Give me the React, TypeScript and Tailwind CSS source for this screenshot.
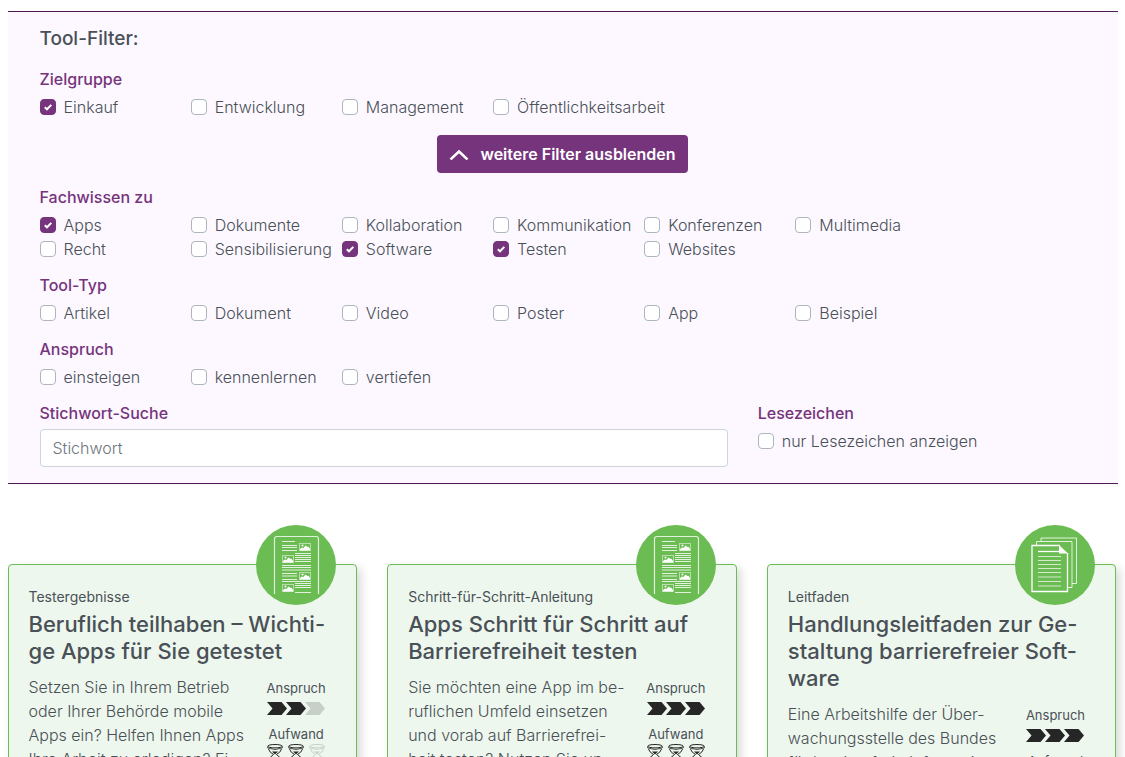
import type { ReactNode } from "react";

type Option = { label: string; checked?: boolean };

const zielgruppe: Option[] = [
  { label: "Einkauf", checked: true },
  { label: "Entwicklung" },
  { label: "Management" },
  { label: "Öffentlichkeitsarbeit" },
];

const fachwissen: Option[] = [
  { label: "Apps", checked: true },
  { label: "Dokumente" },
  { label: "Kollaboration" },
  { label: "Kommunikation" },
  { label: "Konferenzen" },
  { label: "Multimedia" },
  { label: "Recht" },
  { label: "Sensibilisierung" },
  { label: "Software", checked: true },
  { label: "Testen", checked: true },
  { label: "Websites" },
];

const toolTyp: Option[] = [
  { label: "Artikel" },
  { label: "Dokument" },
  { label: "Video" },
  { label: "Poster" },
  { label: "App" },
  { label: "Beispiel" },
];

const anspruch: Option[] = [
  { label: "einsteigen" },
  { label: "kennenlernen" },
  { label: "vertiefen" },
];

type Tool = {
  kind: string;
  title: string[];
  text: string[];
  level: number;
  effort: number;
  icon: "poster" | "pages";
};

const tools: Tool[] = [
  {
    kind: "Testergebnisse",
    title: ["Beruflich teilhaben – Wichti-", "ge Apps für Sie getestet"],
    text: [
      "Setzen Sie in Ihrem Betrieb",
      "oder Ihrer Behörde mobile",
      "Apps ein? Helfen Ihnen Apps",
      "Ihre Arbeit zu erledigen? Ei-",
    ],
    level: 2,
    effort: 2,
    icon: "poster",
  },
  {
    kind: "Schritt-für-Schritt-Anleitung",
    title: ["Apps Schritt für Schritt auf", "Barrierefreiheit testen"],
    text: [
      "Sie möchten eine App im be-",
      "ruflichen Umfeld einsetzen",
      "und vorab auf Barrierefrei-",
      "heit testen? Nutzen Sie un-",
    ],
    level: 3,
    effort: 3,
    icon: "poster",
  },
  {
    kind: "Leitfaden",
    title: ["Handlungsleitfaden zur Ge-", "staltung barrierefreier Soft-", "ware"],
    text: [
      "Eine Arbeitshilfe der Über-",
      "wachungsstelle des Bundes",
      "für barrierefreie Informati-",
    ],
    level: 3,
    effort: 3,
    icon: "pages",
  },
];

function Lines({ lines }: { lines: string[] }) {
  return (
    <>
      {lines.map((line) => (
        <span key={line} className="block whitespace-nowrap">
          {line}
        </span>
      ))}
    </>
  );
}

function Checkbox({ label, checked }: Option) {
  return (
    <label className="flex h-6 items-center gap-2 font-light whitespace-nowrap">
      <span className="grid size-4 shrink-0">
        <input
          type="checkbox"
          defaultChecked={checked}
          className="peer col-start-1 row-start-1 size-4 appearance-none rounded-sm border border-[#adb5bd] bg-white checked:border-[#75347c] checked:bg-[#75347c]"
        />
        <svg
          viewBox="0 0 16 16"
          className="pointer-events-none invisible col-start-1 row-start-1 size-4 peer-checked:visible"
          fill="none"
          stroke="#fff"
          strokeWidth="2"
        >
          <path d="M4.8 8.2 L7 10.3 L11.3 5.9" />
        </svg>
      </span>
      {label}
    </label>
  );
}

function Heading({ children }: { children: ReactNode }) {
  return <span className="block h-6 font-medium text-[#75347c]">{children}</span>;
}

function FilterGroup({ title, options }: { title: string; options: Option[] }) {
  return (
    <fieldset>
      <legend className="mb-1">
        <Heading>{title}</Heading>
      </legend>
      <div className="grid max-w-[907px] grid-cols-6">
        {options.map((option) => (
          <Checkbox key={option.label} {...option} />
        ))}
      </div>
    </fieldset>
  );
}

function Thumb({ x, y }: { x: number; y: number }) {
  return (
    <g transform={`translate(${x} ${y})`}>
      <rect x="0.5" y="0.5" width="11" height="7" fill="none" stroke="#fff" strokeOpacity="0.5" />
      <path d="M1 7.5 V6 L3 4.5 L4.5 5 L6.5 2.5 L8.5 4 L9.5 3.8 L11 6 V7.5 Z" fill="#fff" />
      <circle cx="3.5" cy="2.5" r="1" fill="#fff" />
    </g>
  );
}

function PosterIcon() {
  return (
    <svg viewBox="0 0 80 80" className="size-20" aria-hidden="true">
      <circle cx="40" cy="40" r="40" fill="#6bbc52" />
      <path
        d="M18.5 69 V14 Q18.5 11.5 21 11.5 H60 Q62.5 11.5 62.5 14 V69"
        fill="none"
        stroke="#fff"
        strokeOpacity="0.8"
        strokeWidth="1.2"
      />
      <g stroke="#fff" strokeOpacity="0.8">
        <path d="M26 16.5 H39 M26 20.5 H41 M26 22.5 H41 M26 25.5 H41" />
        <path d="M39 28.5 H55 M39 30.5 H55 M39 32.5 H55 M39 34.5 H55 M39 36.5 H55" />
        <path d="M26 40.5 H55 M26 42.5 H55 M26 45 H55" />
        <path d="M26 48.5 H41 M26 51 H41 M26 54.5 H41 M26 56.5 H55" />
        <path d="M39 58.5 H55 M39 60.5 H55 M39 62.5 H55 M39 67.5 H55" />
      </g>
      <Thumb x={43} y={18} />
      <Thumb x={26} y={30} />
      <Thumb x={43} y={47} />
      <Thumb x={26} y={59} />
    </svg>
  );
}

function PagesIcon() {
  return (
    <svg viewBox="0 0 80 80" className="size-20" aria-hidden="true">
      <circle cx="40" cy="40" r="40" fill="#6bbc52" />
      <g fill="none" stroke="#fff" strokeOpacity="0.8">
        <path d="M26 16 V13 H61.5 V58.5 H57" />
        <path d="M21.5 20 V16.5 H57 V62.5 H53" />
      </g>
      <path d="M45 20.5 H17 V66.5 H52.5 V28" fill="none" stroke="#fff" strokeWidth="1.3" />
      <path d="M44 20 L53 28.5 H44 Z" fill="#fff" />
      <path d="M23 26.5 H44" stroke="#fff" strokeWidth="1.3" />
      <path
        d="M23 31.5 H46 M23 35.5 H46 M23 39.5 H46 M23 43.5 H46 M23 47.5 H46 M23 52 H46 M23 56.5 H46 M23 61 H46"
        stroke="#fff"
        strokeOpacity="0.7"
      />
    </svg>
  );
}

function Arrows({ level }: { level: number }) {
  return (
    <svg viewBox="0 0 58 13" className="h-[13px] w-[58px]" aria-hidden="true">
      {[0, 1, 2].map((i) => (
        <path
          key={i}
          transform={`translate(${i * 19} 0)`}
          d="M0 0 H14.5 L20 6.5 L14.5 13 H0 L5.5 6.5 Z"
          fill={i < level ? "#262626" : "#c8cec8"}
        />
      ))}
    </svg>
  );
}

function Hourglasses({ effort }: { effort: number }) {
  return (
    <svg viewBox="0 0 58 26" className="h-[26px] w-[58px]" aria-hidden="true">
      {[0, 1, 2].map((i) => {
        const color = i < effort ? "#262626" : "#c8cec8";
        return (
          <g key={i} transform={`translate(${i * 21} 0)`} fill="none" stroke={color}>
            <ellipse cx="8" cy="2.2" rx="7.3" ry="1.7" />
            <path d="M0.7 2.5 V4 Q8 7 15.3 4 V2.5" strokeWidth="0.8" />
            <path d="M1.5 5 Q2.5 8.5 6.5 10.5 L3 13.5 M14.5 5 Q13.5 8.5 9.5 10.5 L13 13.5" />
            <path d="M5 7.5 H11 L8 10.5 Z" fill={color} stroke="none" />
            <path d="M3 13.500 Q1.500 17 1.500 20 M13 13.500 Q14.500 17 14.500 20" />
            <ellipse cx="8" cy="22.5" rx="7.3" ry="2" />
          </g>
        );
      })}
    </svg>
  );
}

function ToolCard({ tool }: { tool: Tool }) {
  return (
    <article className="relative rounded-sm border border-[#6bbc52] bg-[#eef7ed] px-5 pt-[22px] pb-5 shadow-[4px_4px_10px_rgba(0,0,0,0.15)]">
      <div className="absolute -top-10 right-5">
        {tool.icon === "poster" ? <PosterIcon /> : <PagesIcon />}
      </div>
      <p className="text-sm leading-5">{tool.kind}</p>
      <h2 className="mt-1 text-[22px] leading-[27px] font-medium">
        <Lines lines={tool.title} />
      </h2>
      <div className="mt-[10px] flex justify-between">
        <p className="font-light">
          <Lines lines={tool.text} />
        </p>
        <div className="mr-[10px] flex w-[60px] shrink-0 flex-col items-center text-[13px] leading-5">
          <span className="mt-[3px]">Anspruch</span>
          <span className="mt-1 mb-[9px] block">
            <Arrows level={tool.level} />
          </span>
          <span>Aufwand</span>
          <Hourglasses effort={tool.effort} />
        </div>
      </div>
    </article>
  );
}

export default function App() {
  return (
    <div className="mx-auto max-w-[1110px] pt-[11px] font-['Inter','Noto_Sans',sans-serif] text-base text-[#495057]">
      <form className="flex flex-col gap-3 border-y border-[#4f1a56] bg-[#fdf8ff] px-8 pt-[15px] pb-4">
        <h1 className="mb-1 text-[19px] leading-6 font-medium">Tool-Filter:</h1>
        <FilterGroup title="Zielgruppe" options={zielgruppe} />
        <button
          type="button"
          className="mt-1 flex h-[38px] items-center gap-[11px] self-center rounded-sm bg-[#75347c] px-3 font-semibold text-white"
        >
          <svg viewBox="0 0 20 12" className="h-3 w-5" fill="none" stroke="#fff" strokeWidth="2.5">
            <path d="M1.5 11.5 L10 3.5 L18.5 11.5" />
          </svg>
          weitere Filter ausblenden
        </button>
        <FilterGroup title="Fachwissen zu" options={fachwissen} />
        <FilterGroup title="Tool-Typ" options={toolTyp} />
        <FilterGroup title="Anspruch" options={anspruch} />
        <div className="grid grid-cols-[21fr_10fr] gap-[30px]">
          <label className="flex flex-col gap-1">
            <Heading>Stichwort-Suche</Heading>
            <input
              type="text"
              placeholder="Stichwort"
              className="h-[38px] rounded-sm border border-[#ced4da] bg-white px-3 font-light placeholder:text-[#6c757d]"
            />
          </label>
          <div className="flex flex-col gap-1">
            <Heading>Lesezeichen</Heading>
            <Checkbox label="nur Lesezeichen anzeigen" />
          </div>
        </div>
      </form>
      <main className="mt-20 mr-px grid grid-cols-3 gap-[30px]">
        {tools.map((tool) => (
          <ToolCard key={tool.kind} tool={tool} />
        ))}
      </main>
    </div>
  );
}
